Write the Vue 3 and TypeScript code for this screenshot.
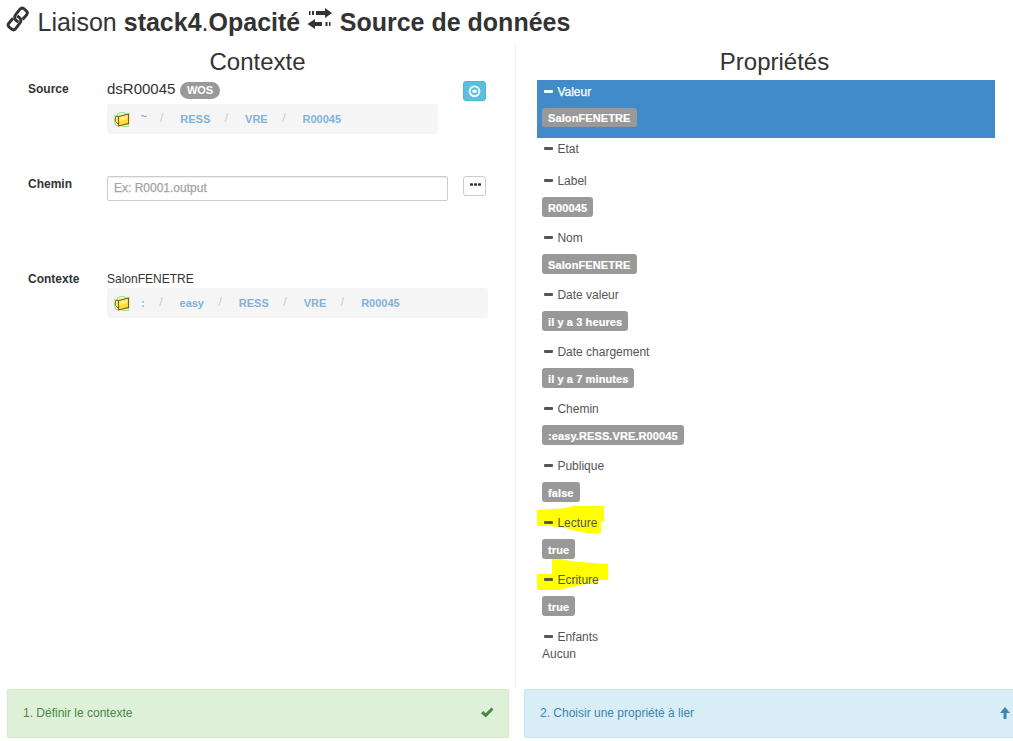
<script setup lang="ts">
interface Property {
  name: string
  value?: string
  plain?: string
  active?: boolean
  mark?: { className: string; points: string }
}

interface Trail {
  id: string
  parts: string[]
}

const source: Trail = { id: 'source', parts: ['~', 'RESS', 'VRE', 'R00045'] }
const context: Trail = { id: 'context', parts: [':', 'easy', 'RESS', 'VRE', 'R00045'] }

const properties: Property[] = [
  { name: 'Valeur', value: 'SalonFENETRE', active: true },
  { name: 'Etat' },
  { name: 'Label', value: 'R00045' },
  { name: 'Nom', value: 'SalonFENETRE' },
  { name: 'Date valeur', value: 'il y a 3 heures' },
  { name: 'Date chargement', value: 'il y a 7 minutes' },
  { name: 'Chemin', value: ':easy.RESS.VRE.R00045' },
  { name: 'Publique', value: 'false' },
  {
    name: 'Lecture',
    value: 'true',
    mark: {
      className: 'mark-read',
      points: '0,4 16,3 29,2 36,0 67,0 67,16 64,16 64,27 50,27 40,25 35,24 28,22 13,20 0,20',
    },
  },
  {
    name: 'Ecriture',
    value: 'true',
    mark: {
      className: 'mark-write',
      points: '0,15 15,15 15,0 24,0 33,2 45,3 55,4 71,5 71,21 61,21 61,25 48,25 40,27 30,29 21,31 0,31',
    },
  },
  { name: 'Enfants', plain: 'Aucun' },
]
</script>

<template>
  <div class="page">
    <h1 class="title">
      <svg class="link-icon" width="24" height="27" viewBox="0 0 24 27" fill="none" stroke="#333" stroke-width="2.9" stroke-linejoin="round">
        <path d="M12.300 16.200L9.600 13.800Q7.800 11.500 9.300 9.200L14 3.200Q15.800 1.200 17.800 2.700L20.300 4.800Q22.200 6.500 20.700 8.700L16.600 13.500" />
        <path d="M11.200 9.800L14 12.200Q15.800 14.400 14.200 16.700L9.600 22.700Q7.800 24.800 5.800 23.200L3.200 21.200Q1.200 19.400 2.800 17.200L7 12.300" />
      </svg>
      <span class="word">Liaison</span>
      <b class="target">stack4</b><span>.</span><b>Opacité</b>
      <svg class="swap-icon" width="26" height="22" viewBox="0 0 26 22" fill="#333">
        <path d="M2 3h1.500v4H2zM5 3h2v4H5zM9 3h9V0l7 5-7 5V7H9z" />
        <path d="M23.500 14H22v4h1.500zM20.500 14h-2v4h2zM15 14H8v-3l-7.500 5L8 21v-3h7z" />
      </svg>
      <b class="origin">Source de données</b>
    </h1>

    <main class="columns">
      <section class="context">
        <h2>Contexte</h2>
        <div class="row">
          <label>Source</label>
          <div class="field narrow">
            <div class="ds">dsR00045 <span class="pill">WOS</span></div>
            <div :class="['crumbs', source.id]">
              <svg class="folder" width="17" height="17" viewBox="0 0 17 17">
                <path d="M1.500 6V4.500h3V2.500h2v-1h5v1h2M1.500 7v5h1v2.500h4M9 15.500h6.500v-2h-2" fill="none" stroke="#90ee90" />
                <path d="M2.500 5.500h3v8l-3-3z" fill="#ffef85" stroke="#a36c08" />
                <path d="M5.500 5.500l10-2.500v9.500l-10 2.500z" fill="#ffdf32" stroke="#8f5a05" stroke-width="1.200" />
                <path d="M6.500 6.500l8-2v3.500l-8 2z" fill="#fff08a" />
              </svg>
              <template v-for="(part, i) in source.parts" :key="part">
                <span v-if="i" class="slash">/</span><a :class="{ tilde: !i }">{{ part }}</a>
              </template>
            </div>
          </div>
          <button class="btn info" type="button">
            <svg width="13" height="13" viewBox="0 0 13 13">
              <circle cx="6.500" cy="6.300" r="4.900" fill="none" stroke="#fff" stroke-width="1.900" />
              <rect x="4.300" y="4.800" width="4.400" height="3" rx="1" fill="#fff" />
            </svg>
          </button>
        </div>
        <div class="row">
          <label>Chemin</label>
          <input class="path-input" type="text" placeholder="Ex: R0001.output" />
          <button class="btn more" type="button">
            <svg width="11" height="3" viewBox="0 0 11 3" fill="#333">
              <rect y="0.300" width="3" height="2.400" rx=".5" /><rect x="4" y="0.300" width="3" height="2.400" rx=".5" /><rect x="8" y="0.300" width="3" height="2.400" rx=".5" />
            </svg>
          </button>
        </div>
        <div class="row">
          <label>Contexte</label>
          <div class="field wide">
            <div class="ctx">SalonFENETRE</div>
            <div :class="['crumbs', context.id]">
              <svg class="folder" width="17" height="17" viewBox="0 0 17 17">
                <path d="M1.500 6V4.500h3V2.500h2v-1h5v1h2M1.500 7v5h1v2.500h4M9 15.500h6.500v-2h-2" fill="none" stroke="#90ee90" />
                <path d="M2.500 5.500h3v8l-3-3z" fill="#ffef85" stroke="#a36c08" />
                <path d="M5.500 5.500l10-2.500v9.500l-10 2.500z" fill="#ffdf32" stroke="#8f5a05" stroke-width="1.200" />
                <path d="M6.500 6.500l8-2v3.500l-8 2z" fill="#fff08a" />
              </svg>
              <template v-for="(part, i) in context.parts" :key="part">
                <span v-if="i" class="slash">/</span><a>{{ part }}</a>
              </template>
            </div>
          </div>
        </div>
      </section>

      <section class="props">
        <h2>Propriétés</h2>
        <ul>
          <li v-for="p in properties" :key="p.name" :class="{ active: p.active, short: !p.value && !p.plain }">
            <svg v-if="p.mark" :class="['mark', p.mark.className]" width="72" height="32">
              <polygon :points="p.mark.points" fill="#ff0" />
            </svg>
            <div class="name"><i class="dash"></i>{{ p.name }}</div>
            <span v-if="p.value" class="badge">{{ p.value }}</span>
            <div v-if="p.plain" class="plain">{{ p.plain }}</div>
          </li>
        </ul>
      </section>
    </main>

    <footer class="steps">
      <div class="step done">
        <span>1. Définir le contexte</span>
        <svg width="13" height="11" viewBox="0 0 13 11"><path d="M0 6.200L2.300 4l2.400 2.300L10.500.500l2 2.100L4.800 10.500z" fill="#468847" /></svg>
      </div>
      <div class="step next">
        <span>2. Choisir une propriété à lier</span>
        <svg width="10" height="12" viewBox="0 0 10 12"><path d="M5 0l5 6H6.500v6h-3V6H0z" fill="#3a87ad" /></svg>
      </div>
    </footer>
  </div>
</template>

<style>
body {
  margin: 0;
  overflow: hidden;
  background: #fff;
}
</style>

<style scoped>
* {
  box-sizing: border-box;
}
.page {
  width: 1013px;
  height: 741px;
  overflow: hidden;
  color: #333;
  font: 12px/17px "Liberation Sans", Arial, sans-serif;
}
.title {
  display: flex;
  height: 44px;
  margin: 0;
  padding-left: 6px;
  font-size: 25px;
  font-weight: 400;
  line-height: 44px;
  white-space: pre;
}
.link-icon {
  margin-top: 6px;
}
.word {
  margin-left: 7.5px;
}
.target {
  margin-left: 7px;
}
.swap-icon {
  margin: 8px 0 0 7px;
}
.origin {
  margin-left: 6.500px;
}
.columns {
  display: flex;
  height: 644px;
}
.context {
  width: 516px;
  border-right: 1px solid #eee;
}
.crumbs.context {
  width: auto;
  border: 0;
}
h2 {
  height: 36px;
  margin: 0;
  font-size: 24px;
  font-weight: 400;
  line-height: 36px;
  text-align: center;
}
.row {
  display: flex;
  align-items: flex-start;
  height: 95px;
  padding-left: 28px;
}
label {
  width: 79px;
  padding-top: 1px;
  font-weight: 700;
}
.narrow {
  width: 331px;
  margin-right: 25px;
}
.wide {
  width: 381px;
}
.ds {
  display: flex;
  height: 24px;
  font-size: 15px;
  line-height: 18px;
}
.pill {
  height: 17px;
  margin: 2px 0 0 5px;
  padding: 0 6.500px;
  border-radius: 9px;
  background: #999;
  color: #fff;
  font-size: 11px;
  font-weight: 700;
  line-height: 17px;
}
.ctx {
  height: 18px;
  padding-top: 1px;
}
.crumbs {
  display: flex;
  align-items: center;
  height: 30px;
  padding-left: 6px;
  border-radius: 3px;
  background: #f5f5f5;
  font-size: 11px;
  font-weight: 700;
}
.crumbs a {
  color: #82b2dd;
}
.folder {
  margin-right: 11px;
}
.crumbs .tilde {
  margin: -5px -1.500px 0 -0.500px;
}
.slash {
  margin: -2px 17px 0 15px;
  color: #ccc;
  font-size: 12px;
  font-weight: 400;
}
.source .slash {
  margin-right: 17.300px;
}
.context .slash {
  margin: -2px 17px 0 14.500px;
}
.btn {
  display: flex;
  align-items: center;
  justify-content: center;
  width: 23px;
  height: 20px;
  margin-top: 1px;
  padding: 0;
  border: 1px solid #ccc;
  border-radius: 3px;
  background: #fff;
}
.btn.info {
  border-color: #46b8da;
  background: #5bc0de;
}
.btn.more {
  padding: 0 0 3px 2px;
}
.path-input {
  width: 341px;
  height: 25px;
  margin: 1px 15px 0 0;
  padding: 0 6px 2px;
  border: 1px solid #ccc;
  border-radius: 2px;
  box-shadow: inset 0 1px 1px rgba(0, 0, 0, 0.075);
  font: 12px "Liberation Sans", Arial, sans-serif;
}
.path-input::placeholder {
  color: #a4a4a4;
  -webkit-text-stroke: 0.25px #a4a4a4;
}
.props {
  flex: 1;
  padding: 0 0 0 21px;
}
.props h2 {
  width: 475px;
}
ul {
  width: 458px;
  margin: 0;
  padding: 0;
  list-style: none;
}
li {
  position: relative;
  height: 57px;
  padding: 4px 5px 0;
  color: #555;
}
li.short {
  height: 32px;
}
li.active {
  height: 58px;
  margin-bottom: -1px;
  background: #428bca;
  color: #fff;
}
.active .name {
  -webkit-text-stroke: 0.25px #fff;
}
.name {
  position: relative;
  display: flex;
  align-items: center;
  height: 17px;
}
.dash {
  width: 9px;
  height: 3px;
  margin: 0 4.400px 2px 2px;
  border-radius: 1px;
  background: currentColor;
}
.badge {
  position: relative;
  display: block;
  width: max-content;
  height: 20px;
  margin-top: 7px;
  padding: 0 6px;
  border-radius: 3px;
  background: #999;
  color: #fff;
  font-size: 11px;
  font-weight: 700;
  letter-spacing: 0.1px;
  line-height: 22px;
  -webkit-text-stroke: 0.2px #fff;
}
.active .badge {
  height: 19px;
  line-height: 20px;
}
.mark {
  position: absolute;
  left: 0;
}
.mark-read {
  top: -5px;
}
.mark-write {
  top: -9px;
}
.steps {
  display: flex;
  gap: 15px;
  padding: 1px 0 0 7px;
}
.step {
  display: flex;
  flex: none;
  align-items: center;
  justify-content: space-between;
  width: 502px;
  height: 49px;
  padding: 0 15px;
  border: 1px solid #d6e9c6;
  border-radius: 2px;
}
.done {
  padding-right: 14px;
  background: #dff0d8;
  color: #468847;
}
.next {
  border-color: #bce8f1;
  background: #d9edf7;
  color: #3a87ad;
}
.step svg {
  margin-bottom: 2px;
}
</style>
